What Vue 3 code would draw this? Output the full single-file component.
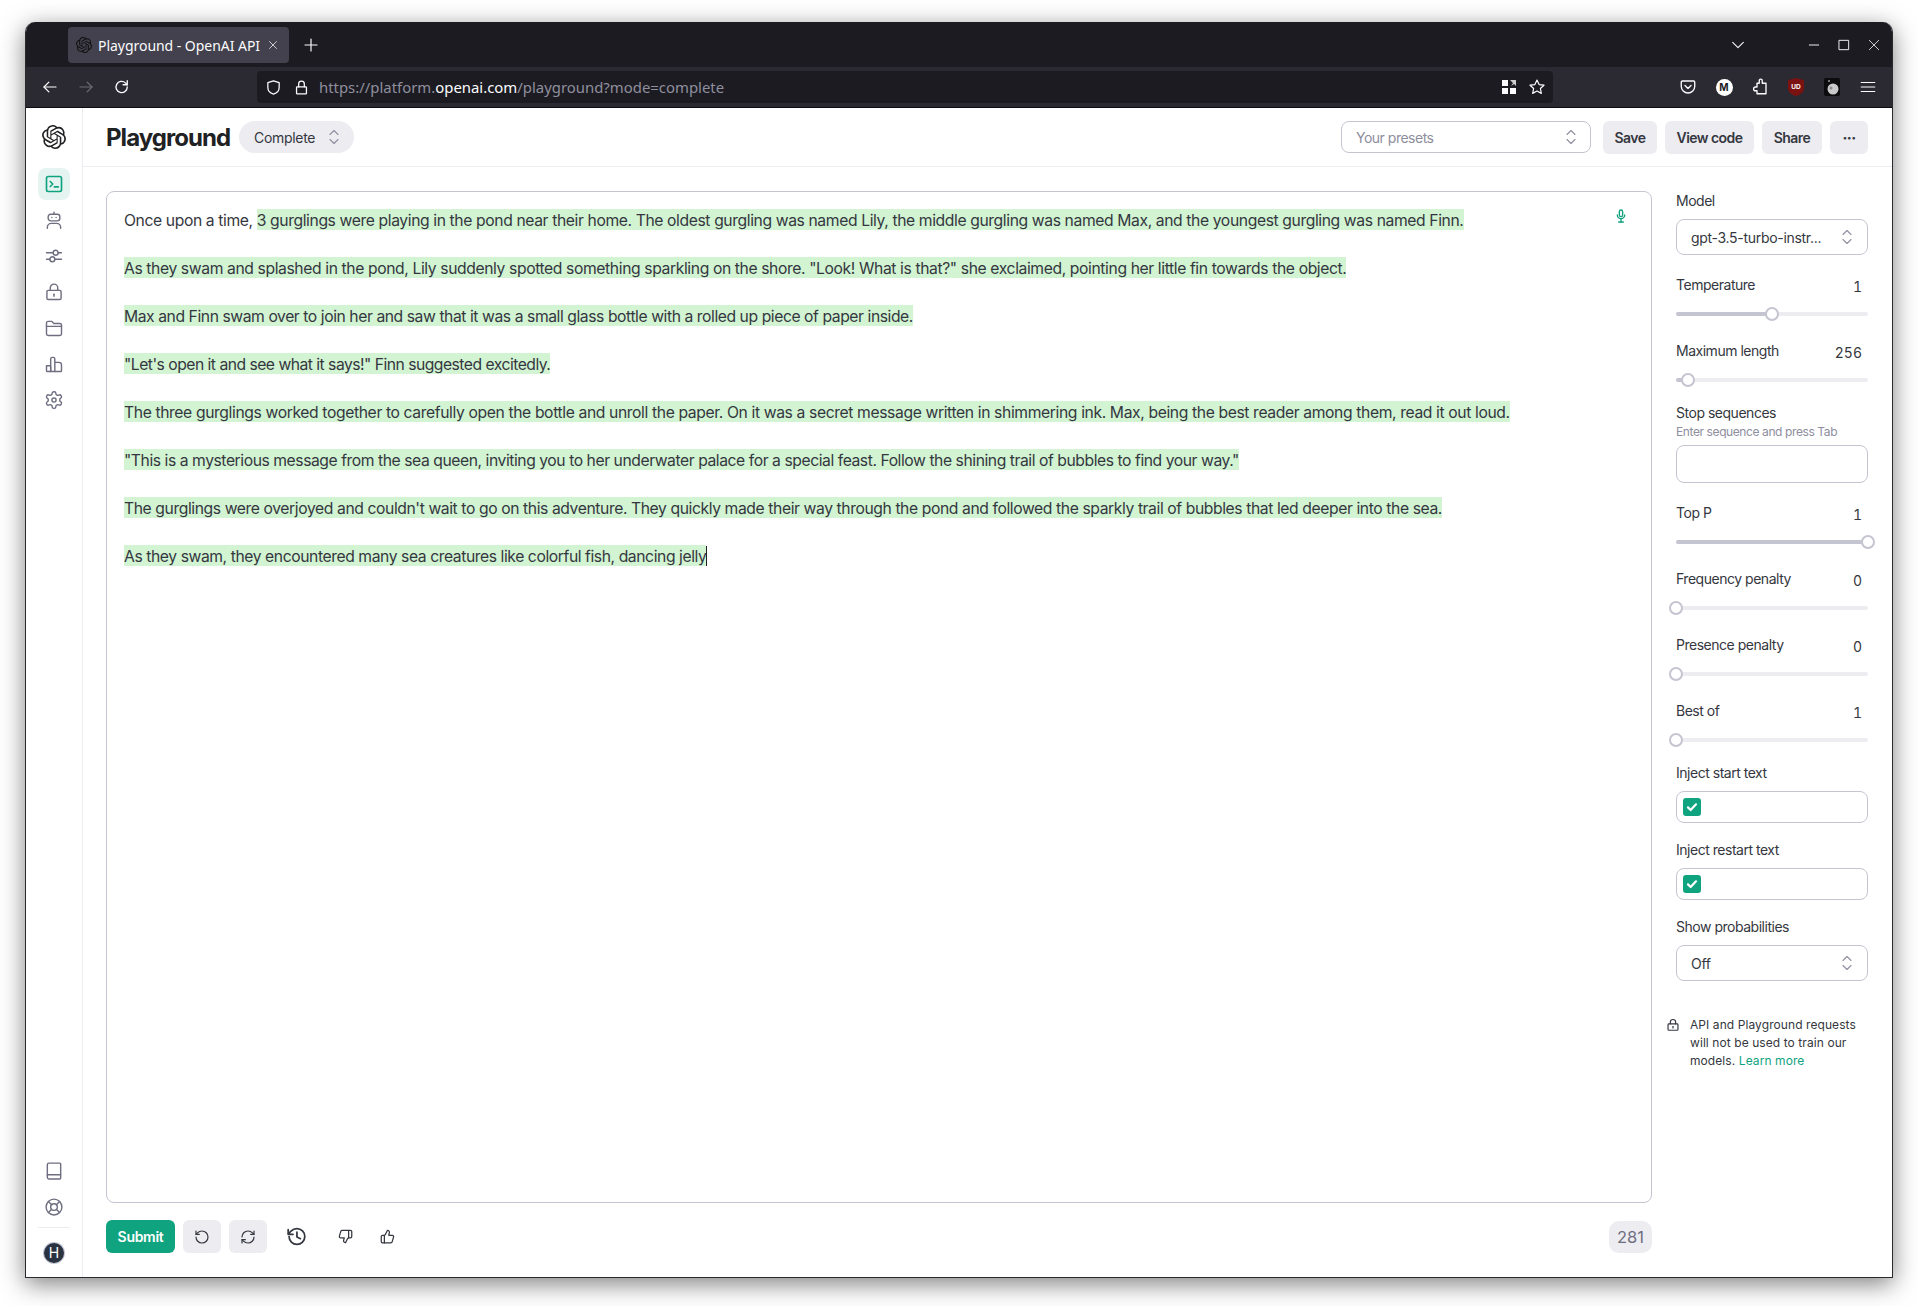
<script setup>
import { h } from 'vue'

const logo = 'M22.2819 9.8211a5.9847 5.9847 0 0 0-.5157-4.9108 6.0462 6.0462 0 0 0-6.5098-2.9A6.0651 6.0651 0 0 0 4.9807 4.1818a5.9847 5.9847 0 0 0-3.9977 2.9 6.0462 6.0462 0 0 0 .7427 7.0966 5.98 5.98 0 0 0 .511 4.9107 6.051 6.051 0 0 0 6.5146 2.9001A5.9847 5.9847 0 0 0 13.2599 24a6.0557 6.0557 0 0 0 5.7718-4.2058 5.9894 5.9894 0 0 0 3.9977-2.9001 6.0557 6.0557 0 0 0-.7475-7.0729zm-9.022 12.6081a4.4755 4.4755 0 0 1-2.8764-1.0408l.1419-.0804 4.7783-2.7582a.7948.7948 0 0 0 .3927-.6813v-6.7369l2.02 1.1686a.071.071 0 0 1 .038.052v5.5826a4.504 4.504 0 0 1-4.4945 4.4944zm-9.6607-4.1254a4.4708 4.4708 0 0 1-.5346-3.0137l.142.0852 4.783 2.7582a.7712.7712 0 0 0 .7806 0l5.8428-3.3685v2.3324a.0804.0804 0 0 1-.0332.0615L9.74 19.9502a4.4992 4.4992 0 0 1-6.1408-1.6464zM2.3408 7.8956a4.485 4.485 0 0 1 2.3655-1.9728V11.6a.7664.7664 0 0 0 .3879.6765l5.8144 3.3543-2.0201 1.1685a.0757.0757 0 0 1-.071 0l-4.8303-2.7865A4.504 4.504 0 0 1 2.3408 7.872zm16.5963 3.8558L13.1038 8.364 15.1192 7.2a.0757.0757 0 0 1 .071 0l4.8303 2.7913a4.4944 4.4944 0 0 1-.6765 8.1042v-5.6772a.79.79 0 0 0-.407-.667zm2.0107-3.0231l-.142-.0852-4.7735-2.7818a.7759.7759 0 0 0-.7854 0L9.409 9.2297V6.8974a.0662.0662 0 0 1 .0284-.0615l4.8303-2.7866a4.4992 4.4992 0 0 1 6.6802 4.66zM8.3065 12.863l-2.02-1.1638a.0804.0804 0 0 1-.038-.0567V6.0742a4.4992 4.4992 0 0 1 7.3757-3.4537l-.142.0805L8.704 5.459a.7948.7948 0 0 0-.3927.6813zm1.0976-2.3654l2.602-1.4998 2.6069 1.4998v2.9994l-2.5974 1.4997-2.6067-1.4997Z'

const circle = (x, y, r) => `M${x - r} ${y}a${r} ${r} 0 1 0 ${2 * r} 0a${r} ${r} 0 1 0 ${-2 * r} 0`
const paths = {
  back: ['M20 12H4', 'M10.5 5.5 4 12l6.5 6.5'],
  forward: ['M4 12h16', 'M13.5 5.5 20 12l-6.5 6.5'],
  reload: ['M19 12a7.5 7.5 0 1 1-2.4-5.5L19 9', 'M19 3.5V9h-5.5'],
  shield: ['M12 2.5 20 5v7c0 5-3.5 8-8 9.5-4.5-1.500-8-4.500-8-9.500V5z'],
  lockTop: ['M6 11h12a1 1 0 0 1 1 1v8a1 1 0 0 1-1 1H6a1 1 0 0 1-1-1v-8a1 1 0 0 1 1-1z', 'M8 11V7a4 4 0 0 1 8 0v4'],
  star: ['M12 2.800l2.800 6 6.500.800-4.800 4.400 1.300 6.500-5.800-3.200-5.800 3.200 1.300-6.500-4.800-4.400 6.500-.800z'],
  pocket: ['M4.500 4h15A1.500 1.500 0 0 1 21 5.500V11a9 9 0 0 1-18 0V5.500A1.500 1.500 0 0 1 4.500 4z', 'M8 10l4 4 4-4'],
  puzzle: ['M11 3.500a2 2 0 0 1 4 0V7h5v14H8v-4H6a2.500 2.500 0 0 1 0-5h2V7h3z'],
  menu: ['M3 6h18', 'M3 12h18', 'M3 18h18'],
  chevron: ['M4 8l8 8 8-8'],
  min: ['M5 12h14'],
  max: ['M5 5h14v14H5z'],
  close: ['M5 5l14 14', 'M19 5 5 19'],
  plus: ['M12 4v16', 'M4 12h16'],
  updown: ['M8 9.500l4-4 4 4', 'M8 14.500l4 4 4-4'],
  terminal: ['M5 3h14a2 2 0 0 1 2 2v14a2 2 0 0 1-2 2H5a2 2 0 0 1-2-2V5a2 2 0 0 1 2-2z', 'M7.500 9l3 3-3 3', 'M12.500 15.500h4.500'],
  robot: ['M8 5h8a3 3 0 0 1 3 3v2a3 3 0 0 1-3 3H8a3 3 0 0 1-3-3V8a3 3 0 0 1 3-3z', 'M12 5V2.500', 'M9.500 9v.01', 'M14.500 9v.01', 'M4 22v-1a5 5 0 0 1 5-5h6a5 5 0 0 1 5 5v1'],
  sliders: ['M3 8h8', 'M17 8h4', circle(14, 8, 3), 'M3 16h4', 'M13 16h8', circle(10, 16, 3)],
  lock: ['M5 10h14a1.500 1.500 0 0 1 1.500 1.500v8A1.500 1.500 0 0 1 19 21H5a1.500 1.500 0 0 1-1.500-1.500v-8A1.500 1.500 0 0 1 5 10z', 'M7.500 10V7a4.500 4.500 0 0 1 9 0v3', 'M12 15v2', 'M12 14.500v.5'],
  folder: ['M3 6a2 2 0 0 1 2-2h4.500l2 2.500H19a2 2 0 0 1 2 2V19a2 2 0 0 1-2 2H5a2 2 0 0 1-2-2z', 'M3 10h18'],
  chart: ['M3 14h4a1 1 0 0 1 1 1v6H4a1 1 0 0 1-1-1z', 'M8 21V6a2 2 0 0 1 2-2h1a2 2 0 0 1 2 2v15z', 'M13 10h5a3 3 0 0 1 3 3v7a1 1 0 0 1-1 1h-7'],
  gear: ['M12.220 2h-.44a2 2 0 0 0-2 2v.18a2 2 0 0 1-1 1.730l-.43.25a2 2 0 0 1-2 0l-.15-.08a2 2 0 0 0-2.730.73l-.22.38a2 2 0 0 0 .73 2.730l.15.1a2 2 0 0 1 1 1.720v.51a2 2 0 0 1-1 1.740l-.15.09a2 2 0 0 0-.73 2.730l.22.38a2 2 0 0 0 2.730.73l.15-.08a2 2 0 0 1 2 0l.43.25a2 2 0 0 1 1 1.730V20a2 2 0 0 0 2 2h.44a2 2 0 0 0 2-2v-.18a2 2 0 0 1 1-1.730l.43-.25a2 2 0 0 1 2 0l.15.08a2 2 0 0 0 2.730-.73l.22-.39a2 2 0 0 0-.73-2.730l-.15-.08a2 2 0 0 1-1-1.740v-.5a2 2 0 0 1 1-1.740l.15-.09a2 2 0 0 0 .73-2.730l-.22-.38a2 2 0 0 0-2.730-.73l-.15.08a2 2 0 0 1-2 0l-.43-.25a2 2 0 0 1-1-1.730V4a2 2 0 0 0-2-2z', circle(12, 12, 2.5)],
  book: ['M6 2.500h13a1 1 0 0 1 1 1v17a1 1 0 0 1-1 1H6a2 2 0 0 1-2-2v-15a2 2 0 0 1 2-2z', 'M4 17.500a1 1 0 0 1 1-1h15'],
  buoy: [circle(12, 12, 9.500), circle(12, 12, 4), 'M5.300 5.300l3.900 3.900', 'M18.700 5.300l-3.900 3.900', 'M5.300 18.700l3.900-3.900', 'M18.700 18.700l-3.900-3.900'],
  undo: ['M3 12a9 9 0 1 0 9-9 9.750 9.750 0 0 0-6.740 2.740L3 8', 'M3 3v5h5'],
  redo: ['M3 12a9 9 0 0 1 9-9 9.750 9.750 0 0 1 6.740 2.740L21 8', 'M21 3v5h-5', 'M21 12a9 9 0 0 1-9 9 9.750 9.750 0 0 1-6.740-2.740L3 16', 'M8 16H3v5'],
  history: ['M3.500 12a9 9 0 1 0 9-9 9.750 9.750 0 0 0-6.740 2.740L3 9', 'M2.500 4v5.500H8', 'M12.500 7v5.500l4 2'],
  down: ['M17 14V3', 'M9 18.120 10 14H4.170a2 2 0 0 1-1.920-2.560l2.330-8A2 2 0 0 1 6.500 2H20a2 2 0 0 1 2 2v8a2 2 0 0 1-2 2h-2.760a2 2 0 0 0-1.790 1.110L12 22a3.130 3.130 0 0 1-3-3.880Z'],
  up: ['M7 10v12', 'M15 5.880 14 10h5.830a2 2 0 0 1 1.920 2.560l-2.330 8A2 2 0 0 1 17.500 22H4a2 2 0 0 1-2-2v-8a2 2 0 0 1 2-2h2.760a2 2 0 0 0 1.790-1.110L12 2a3.130 3.130 0 0 1 3 3.880Z'],
  mic: ['M12 3a2.500 2.500 0 0 1 2.500 2.500v5a2.500 2.500 0 0 1-5 0v-5A2.500 2.500 0 0 1 12 3z', 'M6.500 10.500a5.500 5.500 0 0 0 11 0', 'M12 16v5', 'M8.500 21h7'],
  check: ['M6 12.500l4 4 8-8.500'],
}

const Ico = (props) =>
  h(
    'svg',
    {
      width: props.size || 16,
      height: props.size || 16,
      viewBox: '0 0 24 24',
      fill: 'none',
      stroke: 'currentColor',
      'stroke-width': props.sw || 2,
      'stroke-linecap': 'round',
      'stroke-linejoin': 'round',
    },
    paths[props.name].map((d) => h('path', { d })),
  )
Ico.props = ['name', 'size', 'sw']

const Logo = (props) =>
  h('svg', { width: props.size, height: props.size, viewBox: '0 0 24 24', fill: 'currentColor' }, [h('path', { d: logo })])
Logo.props = ['size']

const navTop = ['robot', 'sliders', 'lock', 'folder', 'chart', 'gear']
const prefix = 'Once upon a time, '
const paragraphs = [
  { t: '3 gurglings were playing in the pond near their home. The oldest gurgling was named Lily, the middle gurgling was named Max, and the youngest gurgling was named Finn.', ls: -0.388 },
  { t: 'As they swam and splashed in the pond, Lily suddenly spotted something sparkling on the shore. "Look! What is that?" she exclaimed, pointing her little fin towards the object.', ls: -0.39 },
  { t: 'Max and Finn swam over to join her and saw that it was a small glass bottle with a rolled up piece of paper inside.', ls: -0.43 },
  { t: '"Let\'s open it and see what it says!" Finn suggested excitedly.', ls: -0.51 },
  { t: 'The three gurglings worked together to carefully open the bottle and unroll the paper. On it was a secret message written in shimmering ink. Max, being the best reader among them, read it out loud.', ls: -0.38 },
  { t: '"This is a mysterious message from the sea queen, inviting you to her underwater palace for a special feast. Follow the shining trail of bubbles to find your way."', ls: -0.44 },
  { t: "The gurglings were overjoyed and couldn't wait to go on this adventure. They quickly made their way through the pond and followed the sparkly trail of bubbles that led deeper into the sea.", ls: -0.404 },
  { t: 'As they swam, they encountered many sea creatures like colorful fish, dancing jelly', ls: -0.42 },
]

const sliderA = [
  { label: 'Temperature', value: '1', pct: 50 },
  { label: 'Maximum length', value: '256', pct: 6.25 },
]
const sliderB = [
  { label: 'Top P', value: '1', pct: 100 },
  { label: 'Frequency penalty', value: '0', pct: 0 },
  { label: 'Presence penalty', value: '0', pct: 0 },
  { label: 'Best of', value: '1', pct: 0 },
]
</script>

<template>
  <div class="desktop">
  <div class="window">
    <div class="tabbar">
      <div class="tab">
        <Logo class="fav" :size="16" />
        <span class="tab-title">Playground - OpenAI API</span>
        <Ico class="tab-x" name="close" :size="12" :sw="1.5" />
      </div>
      <Ico class="tab-plus" name="plus" :size="18" :sw="1.6" />
      <Ico class="tab-list" name="chevron" :size="16" :sw="1.6" />
      <div class="winbtns">
        <span class="winbtn"><Ico name="min" :size="16" :sw="1.4" /></span>
        <span class="winbtn"><Ico name="max" :size="16" :sw="1.4" /></span>
        <span class="winbtn"><Ico name="close" :size="16" :sw="1.2" /></span>
      </div>
    </div>
    <div class="toolbar">
      <span class="tbtn"><Ico name="back" :size="18" :sw="1.6" /></span>
      <span class="tbtn dim"><Ico name="forward" :size="18" :sw="1.6" /></span>
      <span class="tbtn"><Ico name="reload" :size="18" :sw="1.8" /></span>
      <div class="urlbar">
        <Ico class="u-shield" name="shield" :size="17" :sw="1.8" />
        <Ico class="u-lock" name="lockTop" :size="17" :sw="1.8" />
        <span class="url">https://platform.<b>openai.com</b>/playground?mode=complete</span>
        <svg class="u-qr" width="16" height="16" viewBox="0 0 16 16" fill="currentColor">
          <rect x="1" y="1" width="6" height="6" />
          <rect x="1" y="9" width="6" height="6" />
          <rect x="9" y="9" width="6" height="6" />
          <path d="M9 1h6v6l-2-2-3 2 2-3z" opacity=".8" />
        </svg>
        <Ico class="u-star" name="star" :size="18" :sw="1.6" />
      </div>
      <div class="exts">
        <span class="tbtn"><Ico name="pocket" :size="18" :sw="1.8" /></span>
        <span class="tbtn"><span class="m-badge">M</span></span>
        <span class="tbtn"><Ico name="puzzle" :size="18" :sw="1.8" /></span>
        <span class="tbtn">
          <svg width="16" height="18" viewBox="0 0 16 18">
            <path d="M8 0 16 2v8c0 4-3 6.500-8 8-5-1.500-8-4-8-8V2z" fill="#7a1212" />
            <text x="8" y="10.500" text-anchor="middle" class="ub">UD</text>
          </svg>
        </span>
        <span class="tbtn">
          <svg width="16" height="18" viewBox="0 0 16 18">
            <rect width="16" height="18" rx="2" fill="#0b0b0d" />
            <circle cx="9" cy="11" r="5.500" fill="#c9c9c9" />
            <circle cx="7" cy="10" r="1.500" fill="#8a8a8a" />
            <circle cx="5" cy="3" r=".8" fill="#fff" />
          </svg>
        </span>
        <span class="tbtn"><Ico name="menu" :size="18" :sw="1.6" /></span>
      </div>
    </div>

    <div class="app">
      <aside class="sidebar">
        <div class="side-logo"><Logo :size="24" /></div>
        <div class="nav-active"><Ico name="terminal" :size="20" :sw="2" /></div>
        <div v-for="n in navTop" :key="n" class="nav-item"><Ico :name="n" :size="20" :sw="1.7" /></div>
        <div class="side-spacer"></div>
        <div class="nav-item"><Ico name="book" :size="20" :sw="1.7" /></div>
        <div class="nav-item"><Ico name="buoy" :size="20" :sw="1.7" /></div>
        <div class="side-rule"></div>
        <div class="avatar">H</div>
      </aside>

      <div class="page">
        <header class="head">
          <h1 class="title">Playground</h1>
          <div class="mode">Complete <Ico class="updown" name="updown" :size="24" :sw="1.1" /></div>
          <div class="head-right">
            <div class="presets">Your presets <Ico class="updown" name="updown" :size="24" :sw="1.1" /></div>
            <button class="btn b-save">Save</button>
            <button class="btn b-code">View code</button>
            <button class="btn b-share">Share</button>
            <button class="btn b-more">···</button>
          </div>
        </header>

        <div class="content">
          <div class="left">
            <div class="editor">
              <div class="prose">
                <p v-for="(p, i) in paragraphs" :key="i" class="para" :style="{ letterSpacing: p.ls + 'px' }"><template v-if="i === 0">{{ prefix }}</template><span class="hl">{{ p.t }}</span><span v-if="i === paragraphs.length - 1" class="caret"></span></p>
              </div>
              <Ico class="mic" name="mic" :size="16" :sw="2" />
            </div>
            <div class="actions">
              <button class="submit">Submit</button>
              <button class="sq s1"><Ico name="undo" :size="16" :sw="1.8" /></button>
              <button class="sq s2"><Ico name="redo" :size="16" :sw="1.8" /></button>
              <span class="act a-hist"><Ico name="history" :size="21" :sw="2" /></span>
              <span class="act a-down"><Ico name="down" :size="15" :sw="2" /></span>
              <span class="act a-up"><Ico name="up" :size="15" :sw="2" /></span>
              <span class="count">281</span>
            </div>
          </div>

          <div class="panel">
            <div class="lab">Model</div>
            <div class="select model"><span>gpt-3.5-turbo-instr...</span><Ico class="updown" name="updown" :size="24" :sw="1.1" /></div>

            <div v-for="s in sliderA" :key="s.label" class="slider">
              <div class="row"><span class="lab">{{ s.label }}</span><span class="val">{{ s.value }}</span></div>
              <div class="track">
                <div class="fill" :style="{ width: s.pct + '%' }"></div>
                <div class="thumb" :style="{ left: s.pct + '%' }"></div>
              </div>
            </div>

            <div class="lab">Stop sequences</div>
            <div class="hint">Enter sequence and press Tab</div>
            <div class="input"></div>

            <div v-for="s in sliderB" :key="s.label" class="slider">
              <div class="row"><span class="lab">{{ s.label }}</span><span class="val">{{ s.value }}</span></div>
              <div class="track">
                <div class="fill" :style="{ width: s.pct + '%' }"></div>
                <div class="thumb" :style="{ left: s.pct + '%' }"></div>
              </div>
            </div>

            <div class="lab">Inject start text</div>
            <div class="checkbox"><span class="tick"><Ico name="check" :size="16" :sw="3.4" /></span></div>
            <div class="lab gap17">Inject restart text</div>
            <div class="checkbox"><span class="tick"><Ico name="check" :size="16" :sw="3.4" /></span></div>
            <div class="lab gap17">Show probabilities</div>
            <div class="select off"><span>Off</span><Ico class="updown" name="updown" :size="24" :sw="1.1" /></div>

            <div class="notice">
              <Ico class="n-lock" name="lock" :size="14" :sw="2" />
              <p>API and Playground requests will not be used to train our models. <a>Learn more</a></p>
            </div>
          </div>
        </div>
      </div>
    </div>
  </div>
  </div>
</template>

<style>
html, body { margin: 0; background: #fff; }
</style>

<style scoped>
.desktop { box-sizing: border-box; height: 1306px; padding: 22px 0 0 25px; background: #fff; overflow: hidden; }
.window {
  box-sizing: border-box;
  width: 1868px;
  height: 1256px;
  border: 1px solid #2a2a2e;
  border-top: 0;
  border-radius: 10px 10px 0 0;
  box-shadow: 0 6px 24px rgba(0, 0, 0, 0.5);
  overflow: hidden;
  display: flex;
  flex-direction: column;
  font-family: Inter, "Liberation Sans", sans-serif;
  color: #353740;
  background: #fff;
}

/* browser chrome */
.tabbar {
  flex: none;
  height: 45px;
  display: flex;
  align-items: flex-start;
  background: #1c1b22;
  color: #fbfbfe;
  font-family: "Noto Sans", sans-serif;
  padding-left: 42px;
  box-sizing: border-box;
}
.tab {
  box-sizing: border-box;
  width: 221px;
  height: 36px;
  margin-top: 5px;
  background: #42414d;
  border-radius: 4px;
  display: flex;
  align-items: center;
  padding-left: 8px;
}
.fav { color: #111; flex: none; }
.tab-title { margin-left: 6px; font-size: 14px; letter-spacing: -0.04px; line-height: 18px; padding-top: 1px; white-space: nowrap; width: 169px; }
.tab-x { flex: none; }
.tab-plus { margin: 14px 0 0 13px; }
.tab-list { margin: 15px 0 0 1410px; }
.winbtns { margin-left: 53px; display: flex; }
.winbtn { width: 30px; height: 45px; display: flex; align-items: center; justify-content: center; }

.toolbar {
  flex: none;
  height: 41px;
  box-sizing: border-box;
  border-bottom: 1px solid #0c0c0f;
  background: #2b2a33;
  color: #fbfbfe;
  display: flex;
  align-items: flex-start;
  padding: 4px 6px 0;
  font-family: "Noto Sans", sans-serif;
}
.tbtn { width: 36px; height: 32px; display: flex; align-items: center; justify-content: center; flex: none; }
.dim { color: #6d6c75; }
.urlbar {
  margin-left: 117px;
  width: 1296px;
  height: 32px;
  box-sizing: border-box;
  background: #1c1b22;
  border-radius: 4px;
  display: flex;
  align-items: center;
  padding: 0 7px 0 8px;
}
.u-lock { margin-left: 11px; }
.url { margin-left: 9px; font-size: 14.9px; color: #8f8f9d; white-space: nowrap; }
.url b { color: #fbfbfe; font-weight: 400; }
.u-qr { margin-left: auto; }
.u-star { margin-left: 11px; }
.exts { margin-left: auto; display: flex; }
.m-badge {
  width: 17px; height: 17px; border-radius: 50%; background: #fff; color: #1c1b22;
  font: 700 10px/17px Inter, sans-serif; text-align: center;
}
.ub { font: 700 6.5px Inter, sans-serif; fill: #fff; }

/* app shell */
.app { flex: 1; display: flex; min-height: 0; }
.sidebar {
  box-sizing: border-box;
  width: 57px;
  flex: none;
  border-right: 1px solid #ececf1;
  display: flex;
  flex-direction: column;
  align-items: center;
  padding-bottom: 14px;
  color: #6e6e80;
}
.side-logo { height: 57px; display: flex; align-items: center; justify-content: center; color: #202123; }
.nav-active {
  width: 32px; height: 32px; margin-top: 3px; margin-bottom: 2px; border-radius: 8px; background: #e6f4f1; color: #10a37f;
  display: flex; align-items: center; justify-content: center;
}
.nav-item { height: 36px; width: 32px; display: flex; align-items: center; justify-content: center; flex: none; }
.side-spacer { flex: 1; }
.side-rule { width: 32px; height: 1px; background: #ececf1; margin: 2px 0 15px; }
.avatar {
  width: 20px; height: 20px; border-radius: 50%; background: #2a3342; color: #fff;
  box-shadow: 0 0 0 1px #c5c5d2;
  font-size: 14px; line-height: 20px; text-align: center;
}

.page { flex: 1; min-width: 0; display: flex; flex-direction: column; }
.head {
  box-sizing: border-box;
  height: 59px;
  flex: none;
  border-bottom: 1px solid #ececf1;
  display: flex;
  align-items: center;
  padding: 0 24px 0 23px;
}
.title { margin: 0; font-size: 24px; font-weight: 700; letter-spacing: -0.95px; color: #202123; width: 133px; white-space: nowrap; }
.mode {
  box-sizing: border-box; width: 115px; height: 32px; border-radius: 16px; background: #ececf1;
  display: flex; align-items: center; justify-content: space-between; padding: 0 8px 0 15px;
  font-size: 14px; letter-spacing: -0.3px; color: #353740;
}
.updown { color: #8e8ea0; flex: none; }
.head-right { margin-left: auto; display: flex; align-items: center; gap: 8px; }
.presets {
  box-sizing: border-box; width: 250px; height: 32px; margin-right: 4px; border: 1px solid #c5c5d2; border-radius: 8px;
  display: flex; align-items: center; justify-content: space-between; padding: 0 7px 0 14px;
  font-size: 14px; letter-spacing: -0.5px; color: #8e8ea0;
}
.btn {
  height: 33px; padding: 0; border: 0; border-radius: 6px; background: #ececf1; color: #353740;
  font: 600 14px Inter, sans-serif; letter-spacing: -0.55px;
}
.b-save { width: 54px; }
.b-code { width: 89px; }
.b-share { width: 60px; }
.b-more { width: 38px; font-weight: 800; }

.content { flex: 1; min-height: 0; display: flex; gap: 24px; padding: 24px 24px 24px 23px; }
.left { flex: 1; min-width: 0; display: flex; flex-direction: column; }
.editor {
  position: relative;
  flex: 1;
  box-sizing: border-box;
  border: 1px solid #c5c5d2;
  border-radius: 8px;
  padding: 17px 17px 16px;
}
.prose { font-size: 15.7px; line-height: 24px; color: #353740; }
.para { margin: 0 0 24px; white-space: pre-wrap; }
.hl { background: #d2f4d3; padding: 2px 0 0; }
.caret { display: inline-block; width: 1px; height: 20px; background: #202123; vertical-align: -4px; }
.mic { position: absolute; top: 16px; right: 22px; color: #10a37f; }

.actions { flex: none; height: 33px; margin-top: 17px; display: flex; align-items: center; }
.submit {
  width: 69px; height: 33px; padding: 0; border: 0; border-radius: 6px; background: #10a37f; color: #fff;
  font: 600 14px Inter, sans-serif; letter-spacing: -0.3px;
}
.sq {
  width: 38px; height: 33px; padding: 0; border: 0; border-radius: 6px; background: #ececf1; color: #353740;
  display: flex; align-items: center; justify-content: center;
}
.s1 { margin-left: 8px; }
.s2 { margin-left: 8px; }
.act { display: flex; color: #353740; }
.a-hist { margin-left: 19px; }
.a-down { margin-left: 31px; }
.a-up { margin-left: 27px; }
.count {
  margin-left: auto; box-sizing: border-box; width: 43px; height: 32px; border-radius: 10px; background: #ececf1;
  font-size: 16.5px; line-height: 32px; text-align: center; color: #6e6e80;
}

.panel { width: 192px; flex: none; display: flex; flex-direction: column; }
.lab { font-size: 14px; line-height: 20px; letter-spacing: -0.48px; color: #353740; white-space: nowrap; }
.select {
  box-sizing: border-box; height: 36px; margin-top: 8px; border: 1px solid #c5c5d2; border-radius: 8px;
  display: flex; align-items: center; justify-content: space-between; padding: 0 8px 0 14px;
  font-size: 14px; letter-spacing: -0.3px; color: #353740;
}
.model { margin-bottom: 20px; }
.slider { height: 62px; }
.slider + .slider { margin-top: 4px; }
.row { display: flex; justify-content: space-between; height: 20px; align-items: center; padding-right: 6px; }
.val { font-size: 14px; color: #353740; position: relative; top: 1px; font-variant-numeric: tabular-nums; }
.track { position: relative; height: 4px; margin-top: 17px; border-radius: 2px; background: #ececf1; }
.fill { height: 4px; border-radius: 2px; background: #c5c5d2; }
.thumb {
  position: absolute; top: -5px; width: 14px; height: 14px; margin-left: -7px; box-sizing: border-box;
  border: 2px solid #c5c5d2; border-radius: 50%; background: #fff;
}
.hint { font-size: 12px; line-height: 16px; margin-top: 1px; letter-spacing: -0.4px; color: #8e8ea0; white-space: nowrap; }
.input { box-sizing: border-box; height: 38px; margin: 5px 0 20px; border: 1px solid #c5c5d2; border-radius: 8px; }
.checkbox {
  box-sizing: border-box; height: 32px; margin-top: 8px; border: 1px solid #c5c5d2; border-radius: 8px;
  display: flex; align-items: center; padding-left: 6px;
}
.tick {
  width: 18px; height: 18px; border-radius: 3px; background: #10a37f; color: #fff;
  display: flex; align-items: center; justify-content: center;
}
.gap17 { margin-top: 17px; }
.notice { margin: 35px 0 0 -10px; display: flex; gap: 10px; }
.n-lock { flex: none; margin-top: 2px; color: #353740; }
.notice p { margin: 0; font-size: 12px; line-height: 18px; letter-spacing: 0.08px; color: #353740; }
.notice a { color: #10a37f; }
</style>
